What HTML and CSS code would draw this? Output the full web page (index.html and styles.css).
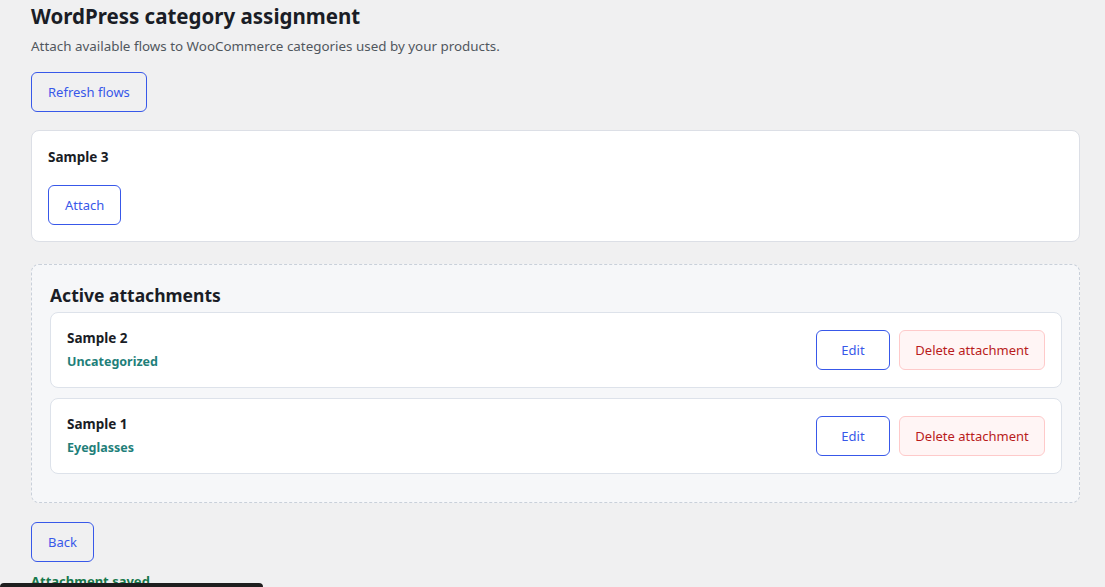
FILE: index.html
```html
<!DOCTYPE html>
<html lang="en">
<head>
<meta charset="utf-8">
<title>WordPress category assignment</title>
<link rel="stylesheet" href="styles.css">
</head>
<body>
<main class="page">
  <h1 class="title">WordPress category assignment</h1>
  <p class="subtitle">Attach available flows to WooCommerce categories used by your products.</p>
  <div class="toolbar">
    <button class="btn btn-primary">Refresh flows</button>
  </div>

  <section class="card flow-card">
    <div class="flow-name">Sample 3</div>
    <div class="flow-actions">
      <button class="btn btn-primary">Attach</button>
    </div>
  </section>

  <section class="attachments">
    <h2 class="attachments-title">Active attachments</h2>
    <div class="attachment-list">
      <div class="attachment">
        <div class="attachment-info">
          <div class="attachment-name">Sample 2</div>
          <div class="attachment-cat">Uncategorized</div>
        </div>
        <div class="attachment-actions">
          <button class="btn btn-primary btn-edit">Edit</button>
          <button class="btn btn-danger">Delete attachment</button>
        </div>
      </div>
      <div class="attachment">
        <div class="attachment-info">
          <div class="attachment-name">Sample 1</div>
          <div class="attachment-cat">Eyeglasses</div>
        </div>
        <div class="attachment-actions">
          <button class="btn btn-primary btn-edit">Edit</button>
          <button class="btn btn-danger">Delete attachment</button>
        </div>
      </div>
    </div>
  </section>

  <div class="footer-actions">
    <button class="btn btn-primary">Back</button>
  </div>
  <p class="status">Attachment saved</p>
</main>
<div class="toast"></div>
</body>
</html>
```
FILE: styles.css
```css
html, body {
  margin: 0;
  padding: 0;
  background: #f0f0f1;
  font-family: "Noto Sans", "Open Sans", sans-serif;
  color: #1d2327;
  overflow: hidden;
}

.page {
  margin: 0 25px 0 31px;
  padding-top: 2px;
}

.title {
  margin: 0;
  font-size: 20.5px;
  line-height: 28px;
  font-weight: 700;
  color: #1a1d26;
}

.subtitle {
  margin: 6px 0 0;
  font-size: 13.4px;
  line-height: 20px;
  color: #50575e;
}

.toolbar {
  margin-top: 16px;
}

.btn {
  font-family: inherit;
  font-size: 13px;
  height: 40px;
  padding: 0 16px;
  border-radius: 6px;
  cursor: pointer;
  background: transparent;
  line-height: 1;
}

.btn-primary {
  border: 1px solid #3858e9;
  color: #3858e9;
}

.card .btn-primary,
.attachment .btn-primary {
  background: #fff;
}

.btn-edit {
  width: 74px;
}

.btn-danger {
  width: 146px;
  padding: 0;
  border: 1px solid #fecaca;
  background: #fff5f5;
  color: #b91c1c;
}

.card {
  margin-top: 18px;
  background: #fff;
  border: 1px solid #dcdfe6;
  border-radius: 8px;
  padding: 16px 16px 16px;
}

.flow-name {
  font-size: 13.5px;
  font-weight: 700;
  line-height: 20px;
  color: #1a1d26;
}

.flow-actions {
  margin-top: 18px;
}

.attachments {
  margin-top: 22px;
  background: #f6f7f9;
  border: 1px dashed #c9d0da;
  border-radius: 8px;
  padding: 18px 17px 28px 18px;
}

.attachments-title {
  margin: 0;
  font-size: 17.5px;
  line-height: 24px;
  font-weight: 700;
  color: #1a1d26;
}

.attachment-list {
  margin-top: 5px;
  display: flex;
  flex-direction: column;
  gap: 10px;
}

.attachment {
  background: #fff;
  border: 1px solid #dde2ea;
  border-radius: 8px;
  padding: 0 16px;
  height: 74px;
  display: flex;
  align-items: center;
  justify-content: space-between;
}

.attachment-info {
  display: flex;
  flex-direction: column;
  gap: 4px;
}

.attachment-name {
  font-size: 13.5px;
  font-weight: 700;
  line-height: 20px;
  color: #1a1d26;
}

.attachment-cat {
  font-size: 12.5px;
  font-weight: 700;
  line-height: 20px;
  color: #1f7f7a;
}

.attachment-actions {
  display: flex;
  gap: 9px;
}

.footer-actions {
  margin-top: 19px;
}

.status {
  margin: 9px 0 0;
  font-size: 13px;
  font-weight: 700;
  color: #16784a;
  line-height: 20px;
}

.toast {
  position: fixed;
  left: 0;
  top: 583px;
  width: 263px;
  height: 40px;
  background: #1e1e1e;
  border-radius: 4px;
}
```
